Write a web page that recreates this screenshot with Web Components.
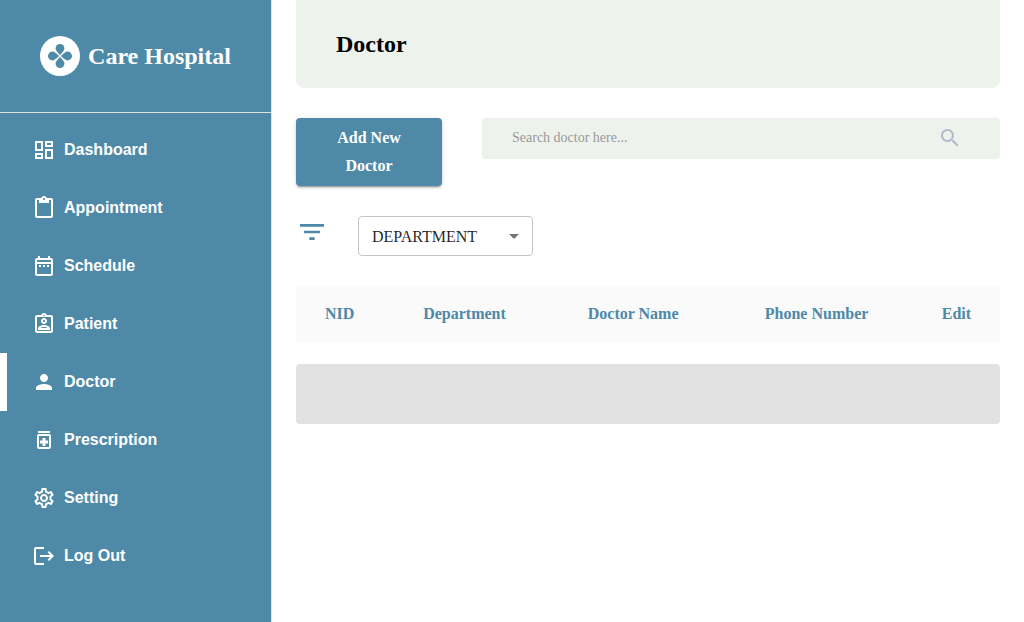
<!DOCTYPE html>
<html lang="en">
<head>
<meta charset="utf-8">
<meta name="viewport" content="width=device-width, initial-scale=1">
<title>Care Hospital - Doctor</title>
<style>
  :root {
    --brand: #4e89a8;
    --panel: #edf2ec;
    --line: #e0e0e0;
  }
  body {
    margin: 0;
    background: #fff;
    color: #000;
    font-family: "Liberation Serif", "Times New Roman", serif;
    font-size: 16px;
    line-height: 24px;
  }
</style>
</head>
<body>
<hospital-app></hospital-app>

<script>
const ICONS = {
  dashboard: 'M19 5v2h-4V5h4M9 5v6H5V5h4m10 8v6h-4v-6h4M9 17v2H5v-2h4M21 3h-8v6h8V3zM11 3H3v10h8V3zm10 8h-8v10h8V11zm-10 4H3v6h8v-6z',
  clipboard: 'M19 2h-4.18C14.4.84 13.3 0 12 0c-1.3 0-2.4.84-2.82 2H5c-1.1 0-2 .9-2 2v16c0 1.1.9 2 2 2h14c1.1 0 2-.9 2-2V4c0-1.1-.9-2-2-2zm-7 0c.55 0 1 .45 1 1s-.45 1-1 1-1-.45-1-1 .45-1 1-1zm7 18H5V4h2v3h10V4h2v16z',
  calendar: 'M7 11h2v2H7v-2zm14-5v14c0 1.1-.9 2-2 2H5c-1.11 0-2-.9-2-2l.01-14c0-1.1.88-2 1.99-2h1V2h2v2h8V2h2v2h1c1.1 0 2 .9 2 2zM5 8h14V6H5v2zm14 12V10H5v10h14zm-4-7h2v-2h-2v2zm-4 0h2v-2h-2v2z',
  patient: 'M19 3h-4.18C14.4 1.84 13.3 1 12 1s-2.4.84-2.82 2H5c-1.1 0-2 .9-2 2v14c0 1.1.9 2 2 2h14c1.1 0 2-.9 2-2V5c0-1.1-.9-2-2-2zm-7-.25c.41 0 .75.34.75.75s-.34.75-.75.75-.75-.34-.75-.75.34-.75.75-.75zM19 19H5V5h14v14zM12 6c-1.65 0-3 1.35-3 3s1.35 3 3 3 3-1.35 3-3-1.35-3-3-3zm0 4c-.55 0-1-.45-1-1s.45-1 1-1 1 .45 1 1-.45 1-1 1zm-6 6.47V18h12v-1.53c0-2.5-3.97-3.58-6-3.58s-6 1.07-6 3.58zM8.31 16c.69-.56 2.38-1.12 3.69-1.12s3.01.56 3.69 1.12H8.31z',
  person: 'M12 12c2.21 0 4-1.79 4-4s-1.79-4-4-4-4 1.79-4 4 1.79 4 4 4zm0 2c-2.67 0-8 1.34-8 4v2h16v-2c0-2.66-5.33-4-8-4z',
  medication: 'M6 3h12v2H6zM17 6H7c-1.1 0-2 .9-2 2v11c0 1.1.9 2 2 2h10c1.1 0 2-.9 2-2V8c0-1.1-.9-2-2-2zm0 13H7V8h10v11zm-6.5-1h3v-2.5H16v-3h-2.5V10h-3v2.5H8v3h2.5V18z',
  settings: 'M19.43 12.98c.04-.32.07-.64.07-.98 0-.34-.03-.66-.07-.98l2.11-1.65c.19-.15.24-.42.12-.64l-2-3.46c-.09-.16-.26-.25-.44-.25-.06 0-.12.01-.17.03l-2.49 1c-.52-.4-1.08-.73-1.69-.98l-.38-2.65C14.46 2.18 14.25 2 14 2h-4c-.25 0-.46.18-.49.42l-.38 2.65c-.61.25-1.17.59-1.69.98l-2.49-1c-.06-.02-.12-.03-.18-.03-.17 0-.34.09-.43.25l-2 3.46c-.13.22-.07.49.12.64l2.11 1.65c-.04.32-.07.65-.07.98 0 .33.03.66.07.98l-2.11 1.65c-.19.15-.24.42-.12.64l2 3.46c.09.16.26.25.44.25.06 0 .12-.01.17-.03l2.49-1c.52.4 1.08.73 1.69.98l.38 2.65c.03.24.24.42.49.42h4c.25 0 .46-.18.49-.42l.38-2.65c.61-.25 1.17-.59 1.69-.98l2.49 1c.06.02.12.03.18.03.17 0 .34-.09.43-.25l2-3.46c.12-.22.07-.49-.12-.64l-2.11-1.65zm-1.98-1.71c.04.31.05.52.05.73 0 .21-.02.43-.05.73l-.14 1.13.89.7 1.08.84-.7 1.21-1.27-.51-1.04-.42-.9.68c-.43.32-.84.56-1.25.73l-1.06.43-.16 1.13-.2 1.35h-1.4l-.19-1.35-.16-1.13-1.06-.43c-.43-.18-.83-.41-1.23-.71l-.91-.7-1.06.43-1.27.51-.7-1.21 1.08-.84.89-.7-.14-1.13c-.03-.31-.05-.54-.05-.74s.02-.43.05-.73l.14-1.13-.89-.7-1.08-.84.7-1.21 1.27.51 1.04.42.9-.68c.43-.32.84-.56 1.25-.73l1.06-.43.16-1.13.2-1.35h1.39l.19 1.35.16 1.13 1.06.43c.43.18.83.41 1.23.71l.91.7 1.06-.43 1.27-.51.7 1.21-1.07.85-.89.7.14 1.13zM12 8c-2.21 0-4 1.79-4 4s1.79 4 4 4 4-1.79 4-4-1.79-4-4-4zm0 6c-1.1 0-2-.9-2-2s.9-2 2-2 2 .9 2 2-.9 2-2 2z',
  logout: 'M4 3h8v2H4v14h8v2H4c-1.1 0-2-.9-2-2V5c0-1.1.9-2 2-2zM17 7l5 5-5 5-1.4-1.4 2.6-2.6H8v-2h10.2l-2.600-2.600z',
  search: 'M15.5 14h-.79l-.28-.27C15.41 12.59 16 11.11 16 9.5 16 5.91 13.09 3 9.5 3S3 5.91 3 9.5 5.91 16 9.5 16c1.61 0 3.09-.59 4.23-1.57l.27.28v.79l5 4.99L20.49 19l-4.99-5zm-6 0C7.01 14 5 11.99 5 9.5S7.01 5 9.5 5 14 7.01 14 9.5 11.99 14 9.5 14z',
  filter: 'M10 18h4v-2h-4v2zM3 6v2h18V6H3zm3 7h12v-2H6v2z',
  arrow: 'M7 10l5 5 5-5z'
};

class Base extends HTMLElement {
  connectedCallback() {
    if (this.shadowRoot) return;
    this.attachShadow({ mode: 'open' }).innerHTML =
      `<style>*{box-sizing:border-box}</style>${this.render()}`;
  }
}

customElements.define('app-icon', class extends Base {
  render() {
    return `<style>
      :host { display: block; flex: none; width: 24px; height: 24px; }
      svg { display: block; width: 100%; height: 100%; fill: currentColor; }
    </style>
    <svg viewBox="0 0 24 24" aria-hidden="true"><path d="${ICONS[this.getAttribute('name')]}"/></svg>`;
  }
});

customElements.define('brand-logo', class extends Base {
  render() {
    return `<style>
      :host { display: flex; align-items: center; justify-content: center; gap: 8px;
              height: 112px; color: #fff; font-size: 24px; font-weight: 700; line-height: 32px; }
      svg { flex: none; width: 40px; height: 40px; }
      .leaf { fill: var(--brand); }
    </style>
    <svg viewBox="0 0 40 40" aria-hidden="true">
      <circle cx="20" cy="20" r="20" fill="#fff"/>
      <path id="leaf" class="leaf" d="M20 19.300L16.700 15.300C16 14.400 15.600 13.500 15.600 12.400a4.400 4.400 0 0 1 8.800 0C24.400 13.500 24 14.400 23.300 15.300z"/>
      <use href="#leaf" transform="rotate(90 20 20)"/>
      <use href="#leaf" transform="rotate(180 20 20)"/>
      <use href="#leaf" transform="rotate(270 20 20)"/>
    </svg>
    <span><slot></slot></span>`;
  }
});

customElements.define('nav-item', class extends Base {
  render() {
    return `<style>
      :host { display: block; }
      a { display: flex; align-items: center; gap: 8px; height: 58px; padding: 0 16px 0 25px;
          border-left: 7px solid transparent; color: #fff; text-decoration: none;
          font: 700 16px/24px "Liberation Sans", Arial, sans-serif; }
      :host([active]) a { border-left-color: #fff; }
    </style>
    <a href="#${this.getAttribute('icon')}"><app-icon name="${this.getAttribute('icon')}"></app-icon><span><slot></slot></span></a>`;
  }
});

customElements.define('side-bar', class extends Base {
  render() {
    return `<style>
      :host { display: block; flex: none; width: 272px; background: var(--brand);
              border-right: 1px solid var(--line); }
      nav { border-top: 1px solid var(--line); padding: 8px 0; }
    </style>
    <brand-logo>Care Hospital</brand-logo>
    <nav aria-label="Main">
      <nav-item icon="dashboard">Dashboard</nav-item>
      <nav-item icon="clipboard">Appointment</nav-item>
      <nav-item icon="calendar">Schedule</nav-item>
      <nav-item icon="patient">Patient</nav-item>
      <nav-item icon="person" active>Doctor</nav-item>
      <nav-item icon="medication">Prescription</nav-item>
      <nav-item icon="settings">Setting</nav-item>
      <nav-item icon="logout">Log Out</nav-item>
    </nav>`;
  }
});

customElements.define('page-header', class extends Base {
  render() {
    return `<style>
      :host { display: block; padding: 28px 40px; background: var(--panel); border-radius: 0 0 8px 8px; }
      h1 { margin: 0; font-size: 24px; line-height: 32px; }
    </style><h1><slot></slot></h1>`;
  }
});

customElements.define('primary-button', class extends Base {
  render() {
    return `<style>
      :host { display: block; }
      button { display: block; width: 100%; padding: 6px 32px; border: 0; border-radius: 4px;
               background: var(--brand); color: #fff; font: inherit; font-weight: 700; line-height: 28px; cursor: pointer;
               box-shadow: 0 3px 1px -2px rgba(0,0,0,.2), 0 2px 2px 0 rgba(0,0,0,.14), 0 1px 5px 0 rgba(0,0,0,.12); }
    </style><button type="button"><slot></slot></button>`;
  }
});

customElements.define('search-box', class extends Base {
  render() {
    return `<style>
      :host { display: block; }
      label { display: flex; align-items: center; height: 41px; padding: 0 38px 2px 30px;
              background: var(--panel); border-radius: 4px; }
      input { flex: 1; min-width: 0; height: 24px; padding: 0; border: 0; outline: 0; background: none;
              font: inherit; font-size: 14px; color: #333; }
      input::placeholder { color: #999; opacity: 1; }
      app-icon { color: #b0bccc; }
    </style>
    <label><input type="search" aria-label="Search doctor" placeholder="Search doctor here..."><app-icon name="search"></app-icon></label>`;
  }
});

customElements.define('filter-bar', class extends Base {
  render() {
    return `<style>
      :host { display: flex; gap: 30px; }
      .filter { width: 32px; height: 32px; color: var(--brand); }
      .field { display: grid; align-items: center; justify-items: end; width: 175px; height: 40px; }
      .field > * { grid-area: 1 / 1; }
      select { width: 100%; height: 100%; padding: 2px 32px 0 13px; appearance: none; border: 1px solid #c4c4c4;
               border-radius: 4px; background: #fff; color: rgba(0,0,0,.87); font: inherit; }
      .field app-icon { margin-right: 7px; color: #757575; pointer-events: none; }
    </style>
    <app-icon class="filter" name="filter"></app-icon>
    <div class="field">
      <select aria-label="Department"><option>DEPARTMENT</option></select>
      <app-icon name="arrow"></app-icon>
    </div>`;
  }
});

customElements.define('doctor-table', class extends Base {
  render() {
    return `<style>
      :host { display: block; }
      table { width: 100%; border-collapse: collapse; background: #fafafa; }
      th { padding: 16px; color: var(--brand); font-weight: 700; line-height: 24px; text-align: center; }
      .placeholder { height: 60px; margin-top: 22px; border-radius: 4px; background: #e2e2e2; }
    </style>
    <table><thead><tr>
      <th scope="col">NID</th><th scope="col">Department</th><th scope="col">Doctor Name</th>
      <th scope="col">Phone Number</th><th scope="col">Edit</th>
    </tr></thead></table>
    <div class="placeholder" role="status" aria-label="Loading doctors"></div>`;
  }
});

customElements.define('hospital-app', class extends Base {
  render() {
    return `<style>
      :host { display: flex; min-height: 100vh; }
      main { flex: 1; min-width: 0; display: flex; flex-direction: column; gap: 30px; padding: 0 24px 24px; }
      .actions { display: grid; grid-template-columns: repeat(12, minmax(0, 1fr)); column-gap: 40px; align-items: start; }
      primary-button { grid-column: span 3; }
      search-box { grid-column: span 9; }
    </style>
    <side-bar></side-bar>
    <main>
      <page-header>Doctor</page-header>
      <div class="actions">
        <primary-button>Add New Doctor</primary-button>
        <search-box></search-box>
      </div>
      <filter-bar></filter-bar>
      <doctor-table></doctor-table>
    </main>`;
  }
});
</script>
</body>
</html>
